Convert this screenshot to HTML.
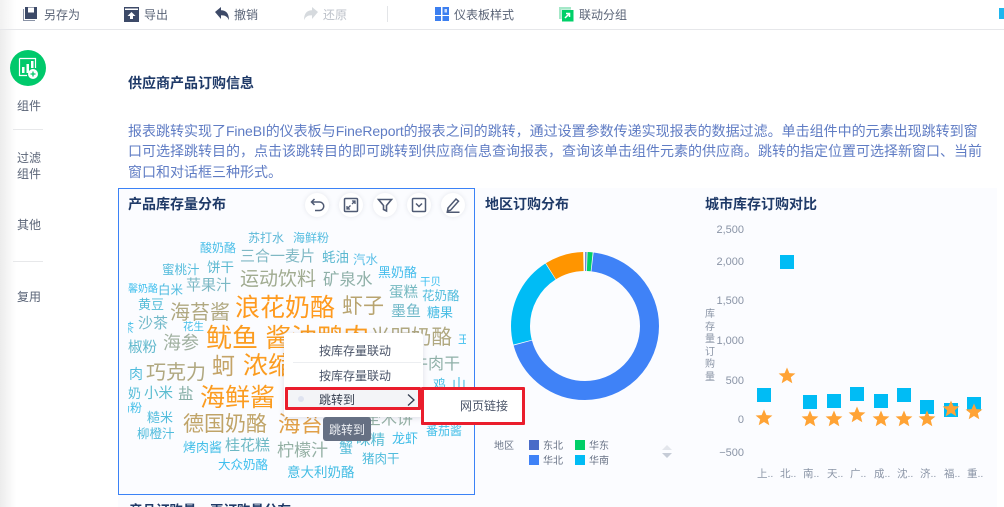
<!DOCTYPE html>
<html lang="zh"><head><meta charset="utf-8"><title>供应商产品订购信息</title>
<style>
html,body{margin:0;padding:0;background:#fff}
#p{position:relative;width:1004px;height:507px;overflow:hidden;background:#fff;font-family:"Liberation Sans","Noto Sans CJK SC",sans-serif;filter:blur(.3px)}
.t{position:absolute;line-height:0;white-space:nowrap;margin-top:1px}
.a{position:absolute}
.tb{font-size:12px;color:#5a6477}
.sd{font-size:12px;color:#5a6477;left:17px}
.h{font-size:14px;font-weight:700;color:#1f3a68}
.d{font-size:14px;color:#5f7cc4;left:128px}
.d b{font-weight:400;letter-spacing:-.13px}
#wc .t{position:absolute}
.ax{font-size:11px;color:#8a94a6;text-align:right;right:260px}
.xl{font-size:10.5px;color:#8a94a6}
.lg{font-size:10px;color:#6a7487}
.btn{position:absolute;width:24px;height:24px;border-radius:50%;background:#fff;box-shadow:0 0 5px rgba(60,70,100,.12);top:193px}
.btn svg{position:absolute;left:3px;top:3px}
</style></head><body><div id="p">

<div class="a" style="left:0;top:0;width:16px;height:507px;background:linear-gradient(90deg,#ececec,#fff)"></div>
<div class="a" style="left:0;top:0;width:1004px;height:29px;background:#fff"></div>
<div class="a" style="left:0;top:0;width:16px;height:29px;background:linear-gradient(90deg,#f1f1f1,#fff)"></div>
<div class="a" style="left:0;top:29px;width:1004px;height:1px;background:#e6e7ea"></div>

<svg class="a" style="left:22px;top:6px" width="16" height="16" viewBox="0 0 16 16"><path d="M1 3v12h12v-1H2V3z" fill="#8a93a6"/><path d="M3 1h12v12H3z" fill="#3d4a68"/><path d="M6 1.500h6v5H6z" fill="#fff"/></svg>
<span class="t tb" style="left:44px;top:14px">另存为</span>
<svg class="a" style="left:124px;top:7px" width="15" height="15" viewBox="0 0 15 15"><path d="M0 0h15v15H0z" fill="#3d4a68"/><path d="M1 1.500h13V3H1z" fill="#fff"/><path d="M7.500 5l4 4H9v3H6V9H3.500z" fill="#fff"/></svg>
<span class="t tb" style="left:144px;top:14px">导出</span>
<svg class="a" style="left:214px;top:6px" width="16" height="16" viewBox="0 0 16 16"><path d="M1 6L7 1v3.300c5 0 8 3 8 10-1.500-3.500-3.500-5-8-5V13z" fill="#3d4a68"/></svg>
<span class="t tb" style="left:234px;top:14px">撤销</span>
<svg class="a" style="left:303px;top:6px" width="16" height="16" viewBox="0 0 16 16"><path d="M15 6L9 1v3.300c-5 0-8 3-8 10 1.500-3.500 3.500-5 8-5V13z" fill="#d6dade"/></svg>
<span class="t tb" style="left:323px;top:14px;color:#bcc1c9">还原</span>
<div class="a" style="left:387px;top:6px;width:1px;height:16px;background:#e3e5e8"></div>
<svg class="a" style="left:435px;top:7px" width="14" height="14" viewBox="0 0 14 14"><path d="M0 0h6v8H0zM0 9h6v5H0zM7.500 9H14v5H7.500z" fill="#3c7ff0"/><path d="M7.500 0H14v8H7.500z" fill="#3c7ff0"/><path d="M9.500 2H12v3.500H9.500z" fill="#cfe0fb"/></svg>
<span class="t tb" style="left:454px;top:14px">仪表板样式</span>
<svg class="a" style="left:559px;top:7px" width="15" height="15" viewBox="0 0 15 15"><path d="M0 0h12v2H2v10H0z" fill="#a5e8c8"/><path d="M2 2h10v1H3v9H2z" fill="#c5f0dc"/><path d="M3 3h11.500v11.500H3z" fill="#00d068"/><path d="M6 11l4-4M7 6.500h3.500V10" stroke="#fff" stroke-width="1.500" fill="none"/></svg>
<span class="t tb" style="left:579px;top:14px">联动分组</span>
<div class="a" style="left:999px;top:8px;width:5px;height:11px;background:#1fb6ee"></div>

<svg class="a" style="left:10px;top:50px" width="36" height="36" viewBox="0 0 36 36"><circle cx="18" cy="18" r="18" fill="#00c96b"/><path d="M9.500 8.500h16V18M17 25.500H9.500v-17" fill="none" stroke="#fff" stroke-width="1.200"/><path d="M12 17h2.500v6H12zM16.500 14H19v9h-2.500zM21 11h2.500v7H21z" fill="#fff"/><circle cx="23" cy="24" r="5" fill="#fff"/><path d="M20.500 24h5M23 21.500v5" stroke="#00c96b" stroke-width="1.300"/></svg>
<span class="t sd" style="top:105px">组件</span>
<div class="a" style="left:13px;top:129px;width:30px;height:1px;background:#e7e8ea"></div>
<span class="t sd" style="top:157px">过滤</span>
<span class="t sd" style="top:173px">组件</span>
<span class="t sd" style="top:224px">其他</span>
<div class="a" style="left:13px;top:261px;width:30px;height:1px;background:#e7e8ea"></div>
<span class="t sd" style="top:296px">复用</span>

<span class="t h" style="left:128px;top:82px;font-size:14px">供应商产品订购信息</span>
<span class="t d" style="top:130px">报表跳转实现了<b>FineBI</b>的仪表板与<b>FineReport</b>的报表之间的跳转，通过设置参数传递实现报表的数据过滤。单击组件中的元素出现跳转到窗</span>
<span class="t d" style="top:150px">口可选择跳转目的，点击该跳转目的即可跳转到供应商信息查询报表，查询该单击组件元素的供应商。跳转的指定位置可选择新窗口、当前</span>
<span class="t d" style="top:171px">窗口和对话框三种形式。</span>

<div class="a" style="left:118px;top:188px;width:879px;height:319px;background:#fbfcff"></div>
<div class="a" style="left:118px;top:188px;width:355px;height:305px;border:1px solid #3b82f6"></div>

<span class="t h" style="left:128px;top:203px">产品库存量分布</span>
<span class="t h" style="left:485px;top:203px">地区订购分布</span>
<span class="t h" style="left:705px;top:203px">城市库存订购对比</span>
<span class="t h" style="left:129px;top:510px;font-size:13.500px">产品订购量、再订购量分布</span>

<div id="wc" class="a" style="left:128px;top:225px;width:338px;height:260px;overflow:hidden">
<div class="a" style="left:-128px;top:-225px;width:600px;height:520px">
<span class="t" style="left:248px;top:237px;font-size:12px;color:#5bb8d8">苏打水</span>
<span class="t" style="left:293px;top:237px;font-size:12px;color:#55bde0">海鲜粉</span>
<span class="t" style="left:200px;top:247px;font-size:12px;color:#4dbfe8">酸奶酪</span>
<span class="t" style="left:240px;top:256px;font-size:15px;color:#7fb8c4">三合一麦片</span>
<span class="t" style="left:322px;top:257px;font-size:13.500px;color:#5ab8d0">蚝油</span>
<span class="t" style="left:353px;top:259px;font-size:12.500px;color:#5cc0e8">汽水</span>
<span class="t" style="left:162px;top:269px;font-size:12.500px;color:#55bcdc">蜜桃汁</span>
<span class="t" style="left:207px;top:267px;font-size:13.500px;color:#5ab8d0">饼干</span>
<span class="t" style="left:240px;top:279px;font-size:19px;color:#a0ab90">运动饮料</span>
<span class="t" style="left:323px;top:279px;font-size:16.500px;color:#8fb0a8">矿泉水</span>
<span class="t" style="left:378px;top:272px;font-size:13px;color:#45bdec">黑奶酪</span>
<span class="t" style="left:420px;top:281px;font-size:10.500px;color:#3fc0f0">干贝</span>
<span class="t" style="left:389px;top:292px;font-size:14.500px;color:#74b8c0">蛋糕</span>
<span class="t" style="left:422px;top:295px;font-size:12.500px;color:#50bcdc">花奶酪</span>
<span class="t" style="left:186px;top:285px;font-size:15px;color:#7cb8c4">苹果汁</span>
<span class="t" style="left:128px;top:289px;font-size:10px;color:#40bfee">馨奶酪</span>
<span class="t" style="left:158px;top:289px;font-size:12.500px;color:#50bce0">白米</span>
<span class="t" style="left:138px;top:304px;font-size:13px;color:#55bcd8">黄豆</span>
<span class="t" style="left:170px;top:312px;font-size:20px;color:#b0a880">海苔酱</span>
<span class="t" style="left:235px;top:307px;font-size:25px;color:#ff9a1e">浪花奶酪</span>
<span class="t" style="left:342px;top:306px;font-size:21px;color:#b8a470">虾子</span>
<span class="t" style="left:391px;top:311px;font-size:15px;color:#70b8c8">墨鱼</span>
<span class="t" style="left:427px;top:312px;font-size:13px;color:#48bce4">糖果</span>
<span class="t" style="left:183px;top:326px;font-size:10.500px;color:#45bfe8">花生</span>
<span class="t" style="left:138px;top:323px;font-size:15px;color:#70b8c8">沙茶</span>
<span class="t" style="left:122px;top:327px;font-size:12px;color:#45bfe8">茶</span>
<span class="t" style="left:128px;top:347px;font-size:14.500px;color:#60b8cc">椒粉</span>
<span class="t" style="left:163px;top:342px;font-size:18px;color:#a0b0a0">海参</span>
<span class="t" style="left:206px;top:337px;font-size:26px;color:#fb9c20">鱿鱼 酱油鸭肉</span>
<span class="t" style="left:370px;top:337px;font-size:20.500px;color:#b0a880">光明奶酪</span>
<span class="t" style="left:458px;top:339px;font-size:11px;color:#40bfee">王</span>
<span class="t" style="left:212px;top:365px;font-size:23px;color:#c4a468">蚵</span>
<span class="t" style="left:243px;top:365px;font-size:25px;color:#fb9c20">浓缩</span>
<span class="t" style="left:412px;top:364px;font-size:16px;color:#8fb0a8">牛肉干</span>
<span class="t" style="left:146px;top:372px;font-size:20px;color:#b0a880">巧克力</span>
<span class="t" style="left:115px;top:373px;font-size:14px;color:#50bcdc">鸡肉</span>
<span class="t" style="left:128px;top:393px;font-size:13px;color:#55bcd8">奶</span>
<span class="t" style="left:144px;top:393px;font-size:14.500px;color:#5abcd0">小米</span>
<span class="t" style="left:178px;top:394px;font-size:15.500px;color:#88b0a8">盐</span>
<span class="t" style="left:200px;top:397px;font-size:25px;color:#fb9c20">海鲜酱</span>
<span class="t" style="left:118px;top:407px;font-size:12px;color:#45bfe8">奶粉</span>
<span class="t" style="left:147px;top:417px;font-size:13px;color:#50bcdc">糙米</span>
<span class="t" style="left:137px;top:433px;font-size:12.500px;color:#50bcdc">柳橙汁</span>
<span class="t" style="left:183px;top:424px;font-size:21px;color:#c0a468">德国奶酪</span>
<span class="t" style="left:278px;top:424px;font-size:22.500px;color:#e0a048">海苔酱</span>
<span class="t" style="left:183px;top:447px;font-size:13px;color:#45bfe8">烤肉酱</span>
<span class="t" style="left:225px;top:445px;font-size:15px;color:#6cb8c4">桂花糕</span>
<span class="t" style="left:277px;top:450px;font-size:17px;color:#94b0a4">柠檬汁</span>
<span class="t" style="left:339px;top:447px;font-size:14px;color:#55bcd8">蟹</span>
<span class="t" style="left:356px;top:440px;font-size:14.500px;color:#58bcd4">味精</span>
<span class="t" style="left:392px;top:438px;font-size:13px;color:#40bde8">龙虾</span>
<span class="t" style="left:426px;top:430px;font-size:12px;color:#45bfe8">番茄酱</span>
<span class="t" style="left:362px;top:458px;font-size:12.500px;color:#50bcdc">猪肉干</span>
<span class="t" style="left:218px;top:464px;font-size:12.500px;color:#40bfee">大众奶酪</span>
<span class="t" style="left:287px;top:472px;font-size:13.500px;color:#45bde4">意大利奶酪</span>
<span class="t" style="left:365px;top:419px;font-size:16px;color:#94b0a4">全木饼</span>
<span class="t" style="left:433px;top:384px;font-size:13px;color:#45bde4">鸡</span>
<span class="t" style="left:452px;top:383px;font-size:14px;color:#45bde4">山</span>
</div></div>

<div class="btn" style="left:305px"><svg width="18" height="18" viewBox="0 0 18 18" fill="none" stroke="#4f5a73" stroke-width="1.500"><path d="M6.500 3L3.500 6l3 3M3.500 6h8a3.500 3.500 0 0 1 0 8.500H7"/></svg></div>
<div class="btn" style="left:339px"><svg width="18" height="18" viewBox="0 0 18 18" fill="none" stroke="#4f5a73" stroke-width="1.500"><rect x="2.500" y="2.500" width="13" height="13" rx="1"/><path d="M5 13l3.500-3.500M10 8l3-3M10 5h3v3M5 10v3h3" stroke-width="1.300"/></svg></div>
<div class="btn" style="left:373px"><svg width="18" height="18" viewBox="0 0 18 18" fill="none" stroke="#4f5a73" stroke-width="1.600"><path d="M2.500 3.500h13L10.500 9.500v5.500l-3-1.500v-4z"/></svg></div>
<div class="btn" style="left:407px"><svg width="18" height="18" viewBox="0 0 18 18" fill="none" stroke="#4f5a73" stroke-width="1.500"><rect x="2.500" y="2.500" width="13" height="13" rx="1"/><path d="M6 7.500l3 3 3-3"/></svg></div>
<div class="btn" style="left:441px"><svg width="18" height="18" viewBox="0 0 18 18" fill="none" stroke="#4f5a73" stroke-width="1.500"><path d="M4 12l8-9 2.500 2.200-8 9-3 .8zM2.500 16.200h13"/></svg></div>

<svg class="a" style="left:505px;top:246px" width="160" height="160" viewBox="0 0 160 160">
<g transform="rotate(-90 80 80)" fill="none" stroke-width="19">
<circle cx="80" cy="80" r="64.500" pathLength="360" stroke="#3f82f7" stroke-dasharray="248.300 360" stroke-dashoffset="-6.700"/>
<circle cx="80" cy="80" r="64.500" pathLength="360" stroke="#00bcf5" stroke-dasharray="72.300 360" stroke-dashoffset="-255.700"/>
<circle cx="80" cy="80" r="64.500" pathLength="360" stroke="#ff9500" stroke-dasharray="30.500 360" stroke-dashoffset="-328.500"/>
<circle cx="80" cy="80" r="64.500" pathLength="360" stroke="#4a6bc8" stroke-dasharray="1 360" stroke-dashoffset="-0.200"/>
<circle cx="80" cy="80" r="64.500" pathLength="360" stroke="#00cf68" stroke-dasharray="4 360" stroke-dashoffset="-2"/>
</g></svg>

<span class="t lg" style="left:494px;top:446px">地区</span>
<div class="a" style="left:529px;top:440px;width:10px;height:10px;background:#4a6bc8"></div>
<span class="t lg" style="left:543px;top:446px">东北</span>
<div class="a" style="left:575px;top:440px;width:10px;height:10px;background:#00cf68"></div>
<span class="t lg" style="left:589px;top:446px">华东</span>
<div class="a" style="left:529px;top:455px;width:10px;height:10px;background:#3f82f7"></div>
<span class="t lg" style="left:543px;top:461px">华北</span>
<div class="a" style="left:575px;top:455px;width:10px;height:10px;background:#00bcf5"></div>
<span class="t lg" style="left:589px;top:461px">华南</span>
<svg class="a" style="left:661px;top:443px" width="12" height="18" viewBox="0 0 12 18"><path d="M1 7l5-5 5 5z" fill="#e3e6ec"/><path d="M1 10h10l-5 5z" fill="#c6ccd7"/></svg>

<span class="t ax" style="top:229px">2,500</span>
<span class="t ax" style="top:261px">2,000</span>
<span class="t ax" style="top:300px">1,500</span>
<span class="t ax" style="top:340px">1,000</span>
<span class="t ax" style="top:380px">500</span>
<span class="t ax" style="top:419px">0</span>
<span class="t ax" style="top:452px">−500</span>
<div class="a" style="left:705px;top:309px;width:10px;font-size:10px;line-height:12.500px;color:#8a94a6;text-align:center">库<br>存<br>量<br>订<br>购<br>量</div>

<svg class="a" style="left:745px;top:240px" width="245" height="200" viewBox="745 240 245 200">
<defs><path id="st" d="M0-8.500L2.400-2.900 8.400-2.500 3.800 1.300 5.300 7.200 0 4 -5.300 7.200 -3.800 1.300 -8.400-2.500 -2.400-2.900z" fill="#ffa335"/></defs>
<g fill="#00bcf5">
<rect x="757" y="388" width="14" height="14"/><rect x="780" y="255" width="14" height="14"/><rect x="803" y="395" width="14" height="14"/><rect x="827" y="394" width="14" height="14"/><rect x="850" y="387" width="14" height="14"/><rect x="874" y="394" width="14" height="14"/><rect x="897" y="388" width="14" height="14"/><rect x="920" y="400" width="14" height="14"/><rect x="944" y="403" width="14" height="14"/><rect x="967" y="397" width="14" height="14"/>
</g>
<use href="#st" x="764" y="418"/><use href="#st" x="787" y="376"/><use href="#st" x="810" y="419"/><use href="#st" x="834" y="419"/><use href="#st" x="857" y="415"/><use href="#st" x="881" y="419"/><use href="#st" x="904" y="419"/><use href="#st" x="927" y="419"/><use href="#st" x="951" y="409"/><use href="#st" x="974" y="412"/>
</svg>

<span class="t xl" style="left:757px;top:473px">上..</span>
<span class="t xl" style="left:780px;top:473px">北..</span>
<span class="t xl" style="left:803px;top:473px">南..</span>
<span class="t xl" style="left:827px;top:473px">天..</span>
<span class="t xl" style="left:850px;top:473px">广..</span>
<span class="t xl" style="left:874px;top:473px">成..</span>
<span class="t xl" style="left:897px;top:473px">沈..</span>
<span class="t xl" style="left:920px;top:473px">济..</span>
<span class="t xl" style="left:944px;top:473px">福..</span>
<span class="t xl" style="left:967px;top:473px">重..</span>

<div class="a" style="left:284px;top:333px;width:139px;height:84px;background:#fff;border-radius:3px;box-shadow:0 1px 6px rgba(60,70,100,.16)"></div>
<span class="t" style="left:319px;top:350px;font-size:12px;color:#4a5468">按库存量联动</span>
<div class="a" style="left:293px;top:362px;width:128px;height:1px;background:#eceef1"></div>
<span class="t" style="left:319px;top:375px;font-size:12px;color:#4a5468">按库存量联动</span>
<div class="a" style="left:285px;top:387px;width:130px;height:17px;background:#f3f4f7;border:3px solid #ea1d2c;border-radius:1px"></div>
<div class="a" style="left:298px;top:396px;width:6px;height:6px;border-radius:50%;background:#dfe3f0"></div>
<span class="t" style="left:319px;top:399px;font-size:12px;color:#333c4e">跳转到</span>
<svg class="a" style="left:406px;top:393px" width="10" height="14" viewBox="0 0 10 14"><path d="M2 1.500L8 7l-6 5.500" fill="none" stroke="#333c4e" stroke-width="1.300"/></svg>
<div class="a" style="left:421px;top:387px;width:98px;height:32px;background:#fff;border:3px solid #ea1d2c;border-radius:1px"></div>
<span class="t" style="left:460px;top:405px;font-size:12px;color:#4a5468">网页链接</span>
<div class="a" style="left:323px;top:417px;width:48px;height:24px;background:#667083;border-radius:3px"></div>
<span class="t" style="left:329px;top:429px;font-size:12px;color:#eef0f4">跳转到</span>

</div></body></html>
